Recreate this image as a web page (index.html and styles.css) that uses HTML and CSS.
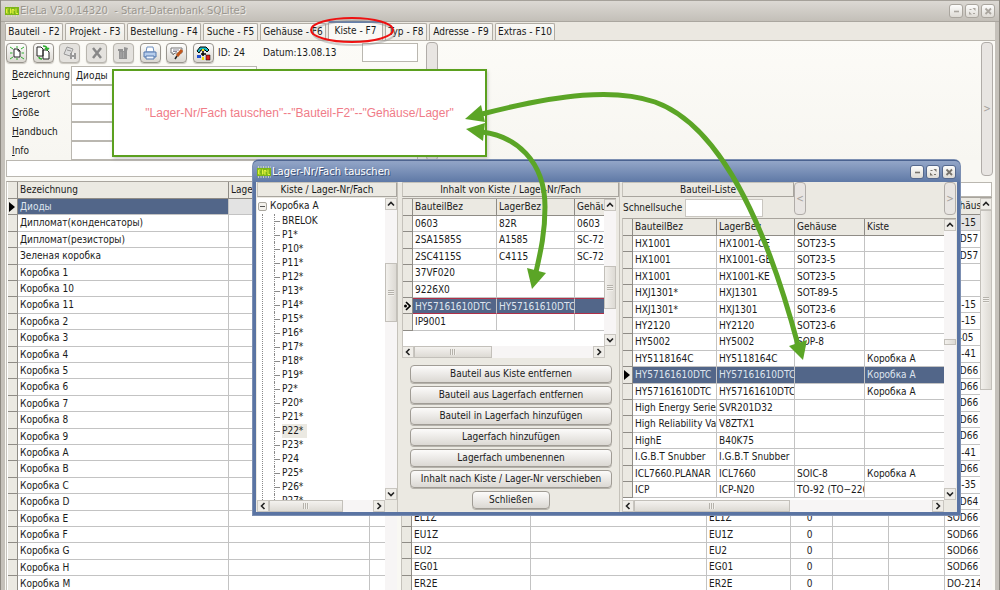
FILE: index.html
```html
<!DOCTYPE html>
<html lang="de">

<head>
    <meta charset="UTF-8">
    <meta name="viewport" content="width=device-width, initial-scale=1.0">
    <title>EleLa - Lager-Nr/Fach tauschen</title>
    <link rel="stylesheet" href="styles.css">
</head>

<body>

    <!-- Shared icon shapes -->
    <svg class="symbols" aria-hidden="true">
        <symbol id="i-up" viewBox="0 0 10 10"><path d="M2 6.5 L5 3.5 L8 6.5" fill="none" stroke="#222" stroke-width="1.6"/></symbol>
        <symbol id="i-down" viewBox="0 0 10 10"><path d="M2 3.5 L5 6.5 L8 3.5" fill="none" stroke="#222" stroke-width="1.6"/></symbol>
        <symbol id="i-left" viewBox="0 0 10 10"><path d="M6.5 2 L3.5 5 L6.5 8" fill="none" stroke="#222" stroke-width="1.6"/></symbol>
        <symbol id="i-right" viewBox="0 0 10 10"><path d="M3.5 2 L6.5 5 L3.5 8" fill="none" stroke="#222" stroke-width="1.6"/></symbol>
        <symbol id="i-min" viewBox="0 0 12 12"><path d="M4 6.5 H9" stroke="currentColor" stroke-width="1.6"/></symbol>
        <symbol id="i-max" viewBox="0 0 12 12"><path d="M6.5 3 H9.5 V6 Z M3 6.5 V9.5 H6 Z" fill="currentColor"/><path d="M3.5 4.5 H5.5 M7 8.5 H9" stroke="currentColor"/></symbol>
        <symbol id="i-close" viewBox="0 0 12 12"><path d="M3.5 3.5 L9 9 M9 3.5 L3.5 9" stroke="currentColor" stroke-width="1.8"/></symbol>
        <symbol id="i-row" viewBox="0 0 8 12"><path d="M1 1 L7 6 L1 11 Z" fill="#000"/></symbol>
        <symbol id="i-logo" viewBox="0 0 14 12">
            <rect y="2" width="14" height="8" fill="#7cb518"/>
            <path d="M1 1 H14 M1 11 H14" stroke="#dfe8c0" stroke-width="1.5" stroke-dasharray="1 1.5"/>
            <path d="M3.5 4 H1.5 V8 H3.5 M1.5 6 H3 M5.5 3.5 V8.5 M9 6 H7 V8 H9 M7 6 V4.500 H9 V6 M11 3.500 V8.500 H13" fill="none" stroke="#e2f23c"/>
        </symbol>
    </svg>

    <!-- Main window -->
    <div class="window">
        <header class="titlebar">
            <svg class="logo"><use href="#i-logo"/></svg>
            <h1>EleLa V3.0.14320 &nbsp;- Start-Datenbank SQLite3</h1>
            <div class="win-buttons">
                <button aria-label="Minimieren"><svg><use href="#i-min"/></svg></button>
                <button aria-label="Maximieren"><svg><use href="#i-max"/></svg></button>
                <button aria-label="Fenster schließen"><svg><use href="#i-close"/></svg></button>
            </div>
        </header>

        <nav class="tabs">
            <button class="w-58">Bauteil - F2</button>
            <button class="w-60">Projekt - F3</button>
            <button class="w-74">Bestellung - F4</button>
            <button class="w-55">Suche - F5</button>
            <button class="w-66">Gehäuse - F6</button>
            <button class="w-55 active">Kiste - F7</button>
            <button class="w-42">Typ - F8</button>
            <button class="w-64">Adresse - F9</button>
            <button class="w-60">Extras - F10</button>
        </nav>

        <div class="page">
            <section class="form-area">
                <div class="form-left">
                    <div class="toolbar">
                        <div class="tools">
                            <button aria-label="Neu"><svg viewBox="0 0 16 16"><path d="M5 4 H9 L11 6 V12 H5 Z" fill="#fff" stroke="#222"/><path d="M9 4 V6 H11" fill="none" stroke="#222"/><path d="M1 2 L4 4 M15 2 L12 4 M1 14 L4 12 M15 14 L12 12 M1 8 H3.500 M12.500 8 H15 M8 1 V3 M8 13 V15" stroke="#2faf2f"/></svg></button>
                            <button aria-label="Kopieren"><svg viewBox="0 0 16 16"><path d="M2 2 H6 L8 4 V11 H2 Z M8 5 H12 L14 7 V14 H8 Z" fill="#fff" stroke="#222"/><path d="M8 1 Q12 1 12 4 M10 3 L12 5 L14 3 M4 12 Q4 14 7 14" fill="none" stroke="#2faf2f" stroke-width="1.5"/></svg></button>
                            <button class="off" aria-label="Speichern"><svg viewBox="0 0 16 16"><path d="M5 2 L11 4 L8 11 L2 9 Z M5 5 L9 6" fill="#ddd" stroke="#999"/><path d="M8 8 H14 V14 H8 Z" fill="#999"/><path d="M10 8 H12 V10 H10 Z M10 12 H12 V14 H10 Z" fill="#eee"/></svg></button>
                            <button class="off" aria-label="Löschen"><svg viewBox="0 0 16 16"><path d="M4 3 L12 13 M12 3 L4 13" stroke="#888" stroke-width="2.500"/></svg></button>
                            <button class="off" aria-label="Papierkorb"><svg viewBox="0 0 16 16"><path d="M4 6 H12 V14 H4 Z M3 4 H8 V6 H3 Z M9 2 L13 3 L12 6 H9 Z" fill="#949494"/><path d="M6 7 V13 M8.500 7 V13" stroke="#aaa"/></svg></button>
                            <button aria-label="Drucken"><svg viewBox="0 0 16 16"><path d="M5 2 H11 L12 7 H4 Z" fill="#fff" stroke="#6d8fc0"/><path d="M2 7 H14 V12 H2 Z" fill="#b6cdec" stroke="#5478ae"/><path d="M4 11 H12 V14 H4 Z" fill="#eef4fc" stroke="#5478ae"/></svg></button>
                            <button aria-label="Bearbeiten"><svg viewBox="0 0 16 16"><path d="M2 3 H13 V8 H6 L4 10 V8 H2 Z" fill="#fff" stroke="#777"/><path d="M4 5 H10 M4 6.500 H8" stroke="#8a8a9a"/><path d="M13 5 L8 11" fill="none" stroke="#c0561c" stroke-width="3"/><path d="M8 11 L6 14" stroke="#222" stroke-width="1.500"/></svg></button>
                            <button aria-label="Gehäuse"><svg viewBox="0 0 16 16"><path d="M2 6 L5 2 H11 L14 5 L12 7 L10 5 H6 L4 8 Z" fill="#19b8c4" stroke="#000"/><path d="M7 4 H9 V6 H7 Z M7 12 H9 V15 H7 Z" fill="#f5e000"/><path d="M8 6 V11 M6 9 H11" fill="none" stroke="#000" stroke-width="1.500"/><path d="M2 10 H6 V13 H2 Z" fill="#1f4fd0"/><path d="M11 10 H15 V15 H11 Z" fill="#d8201c" stroke="#000" stroke-width=".5"/></svg></button>
                        </div>
                        <span class="info-id">ID: 24</span>
                        <span class="info-date">Datum:13.08.13</span>
                        <input class="date-extra" type="text" aria-label="Nummer">
                    </div>
                    <div class="fields">
                        <label for="bez"><u>B</u>ezeichnung</label><input id="bez" class="short" type="text" value="Диоды">
                        <label for="ort"><u>L</u>agerort</label><input id="ort" type="text">
                        <label for="gr"><u>G</u>röße</label><input id="gr" type="text">
                        <label for="hb"><u>H</u>andbuch</label><input id="hb" type="text">
                        <label for="inf"><u>I</u>nfo</label><input id="inf" type="text">
                    </div>
                </div>
                <button class="strip" aria-label="Bereich"></button>
                <div class="form-rest"></div>
                <button class="strip tall">&gt;</button>
            </section>

            <div class="panes">
                <section class="pane-left">
                    <input class="filter" type="text" aria-label="Filter">
                    <div class="grid-box">
                        <table class="grid">
                            <colgroup><col class="c-ind"><col class="c-211"><col class="c-141"><col></colgroup>
                            <thead><tr><th></th><th>Bezeichnung</th><th>Lagerort</th><th></th></tr></thead>
                            <tbody>
                                <tr class="current"><td><svg><use href="#i-row"/></svg></td><td class="sel">Диоды</td><td></td><td></td></tr>
                                <tr><td></td><td>Дипломат(конденсаторы)</td><td></td><td></td></tr>
                                <tr><td></td><td>Дипломат(резисторы)</td><td></td><td></td></tr>
                                <tr><td></td><td>Зеленая коробка</td><td></td><td></td></tr>
                                <tr><td></td><td>Коробка 1</td><td></td><td></td></tr>
                                <tr><td></td><td>Коробка 10</td><td></td><td></td></tr>
                                <tr><td></td><td>Коробка 11</td><td></td><td></td></tr>
                                <tr><td></td><td>Коробка 2</td><td></td><td></td></tr>
                                <tr><td></td><td>Коробка 3</td><td></td><td></td></tr>
                                <tr><td></td><td>Коробка 4</td><td></td><td></td></tr>
                                <tr><td></td><td>Коробка 5</td><td></td><td></td></tr>
                                <tr><td></td><td>Коробка 6</td><td></td><td></td></tr>
                                <tr><td></td><td>Коробка 7</td><td></td><td></td></tr>
                                <tr><td></td><td>Коробка 8</td><td></td><td></td></tr>
                                <tr><td></td><td>Коробка 9</td><td></td><td></td></tr>
                                <tr><td></td><td>Коробка A</td><td></td><td></td></tr>
                                <tr><td></td><td>Коробка B</td><td></td><td></td></tr>
                                <tr><td></td><td>Коробка C</td><td></td><td></td></tr>
                                <tr><td></td><td>Коробка D</td><td></td><td></td></tr>
                                <tr><td></td><td>Коробка E</td><td></td><td></td></tr>
                                <tr><td></td><td>Коробка F</td><td></td><td></td></tr>
                                <tr><td></td><td>Коробка G</td><td></td><td></td></tr>
                                <tr><td></td><td>Коробка H</td><td></td><td></td></tr>
                                <tr><td></td><td>Коробка M</td><td></td><td></td></tr>
                            </tbody>
                        </table>
                        <div class="vscroll"></div>
                    </div>
                </section>

                <section class="pane-right">
                    <input class="filter" type="text" aria-label="Bauteilfilter">
                    <div class="grid-box">
                        <table class="grid">
                            <colgroup><col class="c-ind"><col class="c-119"><col class="c-176"><col class="c-84"><col class="c-42"><col class="c-56"><col class="c-56"><col></colgroup>
                            <thead><tr><th></th><th></th><th></th><th></th><th></th><th></th><th></th><th>Gehäuse</th></tr></thead>
                            <tbody>
                                <tr class="current"><td></td><td></td><td></td><td></td><td></td><td></td><td></td><td>DO-15</td></tr>
                                <tr><td></td><td></td><td></td><td></td><td></td><td></td><td></td><td>SOD57</td></tr>
                                <tr><td></td><td></td><td></td><td></td><td></td><td></td><td></td><td>SOD57</td></tr>
                                <tr><td></td><td></td><td></td><td></td><td></td><td></td><td></td><td></td></tr>
                                <tr><td></td><td></td><td></td><td></td><td></td><td></td><td></td><td></td></tr>
                                <tr><td></td><td></td><td></td><td></td><td></td><td></td><td></td><td>DO-15</td></tr>
                                <tr><td></td><td></td><td></td><td></td><td></td><td></td><td></td><td>DO-15</td></tr>
                                <tr><td></td><td></td><td></td><td></td><td></td><td></td><td></td><td>A-405</td></tr>
                                <tr><td></td><td></td><td></td><td></td><td></td><td></td><td></td><td>DO-41</td></tr>
                                <tr><td></td><td></td><td></td><td></td><td></td><td></td><td></td><td>SOD66</td></tr>
                                <tr><td></td><td></td><td></td><td></td><td></td><td></td><td></td><td>SOD66</td></tr>
                                <tr><td></td><td></td><td></td><td></td><td></td><td></td><td></td><td>SOD66</td></tr>
                                <tr><td></td><td></td><td></td><td></td><td></td><td></td><td></td><td>SOD66</td></tr>
                                <tr><td></td><td></td><td></td><td></td><td></td><td></td><td></td><td>SOD66</td></tr>
                                <tr><td></td><td></td><td></td><td></td><td></td><td></td><td></td><td>DO-41</td></tr>
                                <tr><td></td><td></td><td></td><td></td><td></td><td></td><td></td><td>SOD66</td></tr>
                                <tr><td></td><td></td><td></td><td></td><td></td><td></td><td></td><td>DO-35</td></tr>
                                <tr><td></td><td></td><td></td><td></td><td></td><td></td><td></td><td>SOD64</td></tr>
                                <tr><td></td><td>EL1Z</td><td></td><td>EL1Z</td><td class="num">0</td><td></td><td></td><td>SOD66</td></tr>
                                <tr><td></td><td>EU1Z</td><td></td><td>EU1Z</td><td class="num">0</td><td></td><td></td><td>SOD66</td></tr>
                                <tr><td></td><td>EU2</td><td></td><td>EU2</td><td class="num">0</td><td></td><td></td><td>SOD66</td></tr>
                                <tr><td></td><td>EG01</td><td></td><td>EG01</td><td class="num">0</td><td></td><td></td><td>SOD66</td></tr>
                                <tr><td></td><td>ER2E</td><td></td><td>ER2E</td><td class="num">0</td><td></td><td></td><td>DO-214</td></tr>
                            </tbody>
                        </table>
                        <div class="vscroll">
                            <button aria-label="Nach oben"><svg><use href="#i-up"/></svg></button>
                            <div class="thumb thumb-main grip-h"></div>
                        </div>
                    </div>
                </section>
            </div>
        </div>
    </div>

    <!-- Dialog window -->
    <div class="dialog" role="dialog" aria-labelledby="dlg-title">
        <header class="titlebar">
            <svg class="logo"><use href="#i-logo"/></svg>
            <h2 id="dlg-title">Lager-Nr/Fach tauschen</h2>
            <div class="win-buttons">
                <button aria-label="Minimieren"><svg><use href="#i-min"/></svg></button>
                <button aria-label="Maximieren"><svg><use href="#i-max"/></svg></button>
                <button aria-label="Schließen"><svg><use href="#i-close"/></svg></button>
            </div>
        </header>

        <div class="dialog-body">
            <!-- Tree -->
            <section class="col-tree">
                <h3>Kiste / Lager-Nr/Fach</h3>
                <div class="tree-box">
                    <div class="tree">
                        <div class="root"><span class="toggle"></span>Коробка A</div>
                        <ul>
                            <li>BRELOK</li>
                            <li>P1*</li>
                            <li>P10*</li>
                            <li>P11*</li>
                            <li>P12*</li>
                            <li>P13*</li>
                            <li>P14*</li>
                            <li>P15*</li>
                            <li>P16*</li>
                            <li>P17*</li>
                            <li>P18*</li>
                            <li>P19*</li>
                            <li>P2*</li>
                            <li>P20*</li>
                            <li>P21*</li>
                            <li><span class="picked">P22*</span></li>
                            <li>P23*</li>
                            <li>P24</li>
                            <li>P25*</li>
                            <li>P26*</li>
                            <li>P27*</li>
                        </ul>
                    </div>
                    <div class="vscroll">
                        <button aria-label="Nach oben"><svg><use href="#i-up"/></svg></button>
                        <div class="track"><div class="thumb thumb-tree grip-h"></div></div>
                        <button aria-label="Nach unten"><svg><use href="#i-down"/></svg></button>
                    </div>
                </div>
                <div class="hscroll">
                    <button aria-label="Nach links"><svg><use href="#i-left"/></svg></button>
                    <div class="track"><div class="thumb w-74 grip-v"></div></div>
                    <button aria-label="Nach rechts"><svg><use href="#i-right"/></svg></button>
                </div>
            </section>

            <!-- Content of the box -->
            <section class="col-content">
                <h3>Inhalt von Kiste / Lager-Nr/Fach</h3>
                <div class="grid-box content-box">
                    <table class="grid">
                        <colgroup><col class="c-ind"><col class="c-84"><col class="c-78"><col></colgroup>
                        <thead><tr><th></th><th>BauteilBez</th><th>LagerBez</th><th>Gehäuse</th></tr></thead>
                        <tbody>
                            <tr><td></td><td>0603</td><td>82R</td><td>0603</td></tr>
                            <tr><td></td><td>2SA1585S</td><td>A1585</td><td>SC-72</td></tr>
                            <tr><td></td><td>2SC4115S</td><td>C4115</td><td>SC-72</td></tr>
                            <tr><td></td><td>37VF020</td><td></td><td></td></tr>
                            <tr><td></td><td>9226X0</td><td></td><td></td></tr>
                            <tr class="selected framed"><td><svg viewBox="0 0 8 12"><path d="M3 2 L7 6 L3 10" fill="none" stroke="#000" stroke-width="1.600"/><circle cx="2.500" cy="6" r="1.500"/></svg></td><td>HY57161610DTC</td><td>HY57161610DTC</td><td></td></tr>
                            <tr><td></td><td>IP9001</td><td></td><td></td></tr>
                        </tbody>
                    </table>
                    <div class="vscroll">
                        <button aria-label="Nach oben"><svg><use href="#i-up"/></svg></button>
                        <div class="track"><div class="thumb thumb-content grip-h"></div></div>
                        <button aria-label="Nach unten"><svg><use href="#i-down"/></svg></button>
                    </div>
                </div>
                <div class="hscroll content-scroll">
                    <button aria-label="Nach links"><svg><use href="#i-left"/></svg></button>
                    <div class="track"><div class="thumb w-78 grip-v"></div></div>
                    <button aria-label="Nach rechts"><svg><use href="#i-right"/></svg></button>
                </div>
                <div class="actions">
                    <button>Bauteil aus Kiste entfernen</button>
                    <button>Bauteil aus Lagerfach entfernen</button>
                    <button>Bauteil in Lagerfach hinzufügen</button>
                    <button>Lagerfach hinzufügen</button>
                    <button>Lagerfach umbenennen</button>
                    <button>Inhalt nach Kiste / Lager-Nr verschieben</button>
                    <button class="close">Schließen</button>
                </div>
            </section>

            <!-- Part list -->
            <section class="col-parts">
                <div class="parts-head">
                    <div class="parts-search">
                        <h3>Bauteil-Liste</h3>
                        <div class="quick">
                            <label for="quick">Schnellsuche</label>
                            <input id="quick" type="text">
                        </div>
                    </div>
                    <button class="strip">&lt;</button>
                    <div class="form-rest"></div>
                    <button class="strip">&gt;</button>
                </div>
                <div class="grid-box parts-box">
                    <table class="grid">
                        <colgroup><col class="c-ind"><col class="c-84"><col class="c-78"><col class="c-70"><col></colgroup>
                        <thead><tr><th></th><th>BauteilBez</th><th>LagerBez</th><th>Gehäuse</th><th>Kiste</th></tr></thead>
                        <tbody>
                            <tr><td></td><td>HX1001</td><td>HX1001-CE</td><td>SOT23-5</td><td></td></tr>
                            <tr><td></td><td>HX1001</td><td>HX1001-GE</td><td>SOT23-5</td><td></td></tr>
                            <tr><td></td><td>HX1001</td><td>HX1001-KE</td><td>SOT23-5</td><td></td></tr>
                            <tr><td></td><td>HXJ1301*</td><td>HXJ1301</td><td>SOT-89-5</td><td></td></tr>
                            <tr><td></td><td>HXJ1301*</td><td>HXJ1301</td><td>SOT23-6</td><td></td></tr>
                            <tr><td></td><td>HY2120</td><td>HY2120</td><td>SOT23-6</td><td></td></tr>
                            <tr><td></td><td>HY5002</td><td>HY5002</td><td>SOP-8</td><td></td></tr>
                            <tr><td></td><td>HY5118164C</td><td>HY5118164C</td><td></td><td>Коробка A</td></tr>
                            <tr class="selected"><td><svg><use href="#i-row"/></svg></td><td>HY57161610DTC</td><td>HY57161610DTC</td><td></td><td>Коробка A</td></tr>
                            <tr><td></td><td>HY57161610DTC</td><td>HY57161610DTC</td><td></td><td>Коробка A</td></tr>
                            <tr><td></td><td>High Energy Series</td><td>SVR201D32</td><td></td><td></td></tr>
                            <tr><td></td><td>High Reliability Varistor</td><td>V8ZTX1</td><td></td><td></td></tr>
                            <tr><td></td><td>HighE</td><td>B40K75</td><td></td><td></td></tr>
                            <tr><td></td><td>I.G.B.T Snubber</td><td>I.G.B.T Snubber</td><td></td><td></td></tr>
                            <tr><td></td><td>ICL7660.PLANAR</td><td>ICL7660</td><td>SOIC-8</td><td>Коробка A</td></tr>
                            <tr><td></td><td>ICP</td><td>ICP-N20</td><td>TO-92 (TO−226)</td><td></td></tr>
                        </tbody>
                    </table>
                    <div class="vscroll">
                        <button aria-label="Nach oben"><svg><use href="#i-up"/></svg></button>
                        <div class="track"><div class="thumb thumb-parts"></div></div>
                        <button aria-label="Nach unten"><svg><use href="#i-down"/></svg></button>
                    </div>
                </div>
                <div class="hscroll">
                    <button aria-label="Nach links"><svg><use href="#i-left"/></svg></button>
                    <div class="track"><div class="thumb w-156 grip-v"></div></div>
                    <button aria-label="Nach rechts"><svg><use href="#i-right"/></svg></button>
                </div>
            </section>
        </div>
    </div>

    <!-- Annotations -->
    <p class="callout">"Lager-Nr/Fach tauschen"--"Bauteil-F2"--"Gehäuse/Lager"</p>
    <svg class="marks" viewBox="0 0 1000 590" aria-hidden="true">
        <ellipse cx="354" cy="33" rx="41" ry="12" fill="none" stroke="#8886" stroke-width="2"/>
        <ellipse cx="352" cy="30" rx="41" ry="12" fill="none" stroke="#ee1111" stroke-width="2"/>
        <g fill="none" stroke="#5ba526" stroke-width="5">
            <path d="M482 114 C560 94 615 88 655 102 C725 127 770 240 798 345"/>
            <path d="M482 132 C515 136 545 160 545 207 C545 232 541 250 536 272"/>
        </g>
        <g fill="#5ba526">
            <path d="M465 119 L481 105 L485 122 Z"/>
            <path d="M466 129 L485 123 L483 141 Z"/>
            <path d="M532 289 L527 268 L546 273 Z"/>
            <path d="M803 360 L789 346 L807 340 Z"/>
        </g>
    </svg>

</body>

</html>
```
FILE: styles.css
```css
* {
    box-sizing: border-box;
}

body {
    margin: 0;
    height: 100vh;
    overflow: hidden;
    position: relative;
    background: #b5b1a9;
    color: #1a1a1a;
    font-family: "DejaVu Sans Condensed", "DejaVu Sans", sans-serif;
    font-size: 10px;
    line-height: 14px;
}

button,
input {
    font: inherit;
    color: inherit;
    margin: 0;
    padding: 0;
    border-radius: 0;
}

h1,
h2,
h3,
p,
ul {
    margin: 0;
    padding: 0;
    font-weight: normal;
}

.symbols {
    display: none;
}

/* Windows */
.window {
    height: 100vh;
    display: flex;
    flex-direction: column;
    padding: 0 4px;
    border-left: 1px solid #8d8981;
    border-right: 1px solid #8d8981;
    background: #c5c1ba;
    overflow: hidden;
}

.titlebar {
    display: flex;
    align-items: center;
    flex: none;
    height: 22px;
    margin: 0 -4px;
    padding: 0 4px;
    background: linear-gradient(#dcd9d4, #c3bfb8);
    border-top: 1px solid #a5a19a;
    border-bottom: 1px solid #aaa69f;
    color: #9a968f;
}

.titlebar h1,
.titlebar h2 {
    flex: 1;
    font-family: "DejaVu Sans", sans-serif;
    font-size: 10px;
    white-space: pre;
    text-shadow: 1px 1px 0 #eeece8;
}

.logo {
    width: 14px;
    height: 12px;
    margin-right: 1px;
}

.win-buttons {
    display: flex;
    gap: 2px;
}

.win-buttons button {
    width: 14px;
    height: 14px;
    border: 1px solid #aaa69f;
    border-radius: 3px;
    background: linear-gradient(#fdfdfc, #dedbd5);
    color: #aaa69f;
}

.win-buttons svg {
    display: block;
    width: 12px;
    height: 12px;
}

/* Tabs */
.tabs {
    display: flex;
    flex: none;
    align-items: flex-end;
    gap: 2px;
    height: 19px;
    background: #ebe8e1;
    border-bottom: 1px solid #b9b5ad;
}

.tabs button {
    height: 17px;
    border: 1px solid #b0aca4;
    border-bottom: 0;
    border-radius: 2px 2px 0 0;
    background: linear-gradient(#faf9f6, #eeece6);
    white-space: nowrap;
}

.tabs .active {
    height: 19px;
    padding-bottom: 2px;
    border-top: 2px solid #6480ad;
    background: #faf9f5;
}

.w-42 { width: 42px; }
.w-55 { width: 55px; }
.w-58 { width: 58px; }
.w-60 { width: 60px; }
.w-64 { width: 64px; }
.w-66 { width: 66px; }
.w-74 { width: 74px; }
.w-78 { width: 78px; }
.w-156 { width: 156px; }

/* Upper form */
.page {
    flex: 1;
    min-height: 0;
    display: flex;
    flex-direction: column;
    background: #f9f8f3;
}

.form-area {
    display: flex;
    flex: none;
    height: 119px;
    padding: 1px 2px 0 1px;
    background: linear-gradient(#fcfbf7, #f7f6f1);
}

.form-left {
    width: 420px;
}

.form-rest {
    flex: 1;
}

.toolbar {
    display: flex;
    align-items: center;
    height: 21px;
}

.tools {
    display: flex;
    justify-content: space-between;
    width: 208px;
}

.tools button {
    width: 21px;
    height: 20px;
    border: 1px solid #99958e;
    border-radius: 4px;
    background: linear-gradient(#fefefd, #dad7d1);
    box-shadow: 0 1px 1px #c9c6bf;
}

.tools .off {
    border-color: #b8b5ae;
    background: #e4e2de;
}

.tools svg {
    display: block;
    width: 16px;
    height: 16px;
    margin: 0 auto;
}

.info-id {
    width: 45px;
    margin-left: 4px;
}

.info-date {
    flex: 1;
}

.date-extra {
    width: 56px;
    height: 19px;
    margin-right: 8px;
    border: 1px solid #bab7b0;
    background: #fff;
}

.fields {
    display: grid;
    grid-template-columns: 59px 1fr;
    grid-auto-rows: 1fr;
    align-items: center;
    height: 94px;
    margin: 3px 8px 0 6px;
}

.fields input {
    height: 100%;
    padding: 0 4px;
    border: 1px solid #bab7b0;
    background: #fff;
}

.fields .short {
    width: 186px;
}

.strip {
    width: 12px;
    height: 119px;
    border: 1px solid #b0aca8;
    border-radius: 4px;
    background: #e8e5e2;
    color: #a5a19b;
}

.strip.tall {
    height: 134px;
    z-index: 1;
}

/* Lower panes */
.panes {
    flex: 1;
    min-height: 0;
    display: flex;
    gap: 4px;
    padding: 0 3px 0 1px;
}

.pane-left,
.pane-right {
    display: flex;
    flex-direction: column;
    min-height: 0;
}

.pane-left {
    width: 391px;
}

.pane-right {
    flex: 1;
    min-width: 0;
    padding-top: 22px;
}

.filter {
    flex: none;
    width: 100%;
    height: 17px;
    border: 1px solid #bab7b0;
    background: #fff;
}

.pane-right .filter {
    height: 15px;
}

.grid-box {
    flex: 1;
    min-height: 0;
    display: flex;
    align-items: flex-start;
    overflow: hidden;
    border-top: 1px solid #a8a49d;
    border-left: 1px solid #c5c2bb;
    background: #fff;
}

.pane-left .grid-box {
    margin-top: 4px;
    padding-left: 1px;
}

/* Tables */
.grid {
    flex: 1;
    width: 100%;
    min-width: 0;
    table-layout: fixed;
    border-collapse: separate;
    border-spacing: 0;
}

.c-ind { width: 10px; }
.c-42 { width: 42px; }
.c-56 { width: 56px; }
.c-70 { width: 70px; }
.c-78 { width: 78px; }
.c-84 { width: 84px; }
.c-119 { width: 119px; }
.c-141 { width: 141px; }
.c-176 { width: 176px; }
.c-211 { width: 211px; }

.grid th,
.grid td {
    height: 16px;
    padding: 0 0 0 2px;
    overflow: hidden;
    white-space: nowrap;
    text-align: left;
    font-weight: normal;
    border-right: 1px solid #c3c3c3;
    border-bottom: 1px solid #c3c3c3;
}

.grid th {
    height: 17px;
    background: #ebe9e2;
    border-color: #8f8c86;
}

.grid tr > :first-child {
    padding: 0;
    background: #ebe9e2;
    border-color: #8f8c86;
}

.grid tr > :last-child {
    border-right: 0;
}

/* two rows in five are a pixel taller */
.grid tr:nth-child(5n+2) td,
.grid tr:nth-child(5n+4) td {
    height: 17px;
}

.grid svg {
    display: block;
    width: 8px;
    height: 12px;
}

.grid .num {
    text-align: center;
    padding: 0 4px 0 0;
}

.grid .current td {
    background: #e3e3e3;
}

.grid .current .sel,
.grid .selected td {
    background: #526689;
    color: #dfe5ef;
}

.grid .selected td:first-child,
.grid .current td:first-child {
    background: #ebe9e2;
}

.grid .framed td + td {
    border-top: 1px solid #b03048;
    border-bottom-color: #b03048;
    line-height: 13px;
}

/* Scrollbars */
.vscroll {
    display: flex;
    flex-direction: column;
    flex: none;
    align-self: stretch;
    width: 12px;
    background: #f7f5f5;
}

.hscroll {
    display: flex;
    flex: none;
    height: 12px;
    margin-right: 12px;
    background: #f7f5f5;
}

.vscroll button,
.hscroll button {
    flex: none;
    width: 12px;
    height: 12px;
    border: 1px solid #c9c6c0;
    background: #efede8;
}

.vscroll svg,
.hscroll svg {
    display: block;
    width: 10px;
    height: 10px;
}

.track {
    flex: 1;
    min-height: 0;
}

.thumb {
    display: flex;
    align-items: center;
    justify-content: center;
    border: 1px solid #c3c0ba;
    background: linear-gradient(90deg, #f2f0ec, #dddad4);
}

.hscroll .thumb {
    height: 12px;
    background: linear-gradient(#f4f2ef, #dddad4);
}

.grip-h::before,
.grip-v::before {
    content: "";
    width: 6px;
    height: 6px;
    background: repeating-linear-gradient(#b5b2ab 0 1px, #f2f0ec 1px 2px);
}

.grip-v::before {
    background: repeating-linear-gradient(90deg, #b5b2ab 0 1px, #f2f0ec 1px 2px);
}

.thumb-main { height: 180px; }
.thumb-tree { height: 59px; margin-top: 53px; }
.thumb-content { height: 43px; margin-top: 55px; }
.thumb-parts { height: 6px; margin-top: 108px; }

/* Dialog */
.dialog {
    position: absolute;
    top: 160px;
    left: 253px;
    right: 40px;
    border: 3px solid #5a74a3;
    border-top: 0;
    border-radius: 6px 6px 0 0;
    background: #ebe9e2;
    box-shadow: inset 0 0 0 1px #3f5680, 0 0 0 1px #7c8fb2;
}

.dialog .titlebar {
    margin: 0 -3px;
    padding: 0 4px;
    border: 0;
    border-top: 1px solid #4a6290;
    border-radius: 5px 5px 0 0;
    background: linear-gradient(#93a6c8, #5f79a6);
    color: #fff;
}

.dialog .titlebar h2 {
    text-shadow: 1px 1px 0 #3f5278;
}

.dialog .win-buttons button {
    border-color: #55688c;
    color: #77736c;
}

.dialog-body {
    display: flex;
    background: #ebe9e2;
    padding: 0 1px;
}

.dialog h3 {
    height: 15px;
    border: 1px solid #c5c2ba;
    border-right-color: #a8a59e;
    border-bottom-color: #a8a59e;
    font-size: 10px;
    line-height: 14px;
    text-align: center;
}

.col-tree {
    width: 141px;
    border-right: 1px solid #c5c2ba;
}

.tree-box {
    display: flex;
    height: 302px;
    margin-top: 1px;
    background: #fff;
}

.tree {
    flex: 1;
    overflow: hidden;
    padding-left: 1px;
}

.root {
    display: flex;
    align-items: center;
    height: 16px;
    gap: 3px;
}

.toggle {
    width: 9px;
    height: 9px;
    border: 1px solid #aaa79f;
    border-radius: 2px;
    background: linear-gradient(#555, #555) center / 5px 1px no-repeat #f3f1ec;
}

.tree ul {
    list-style: none;
    margin-left: 4px;
    padding-left: 11px;
    border-left: 1px dotted #8a8a8a;
}

.tree li {
    display: flex;
    align-items: center;
    height: 14px;
    gap: 2px;
    border-left: 1px dotted #8a8a8a;
}

.tree li::before {
    content: "";
    width: 5px;
    border-top: 1px solid #8a8a8a;
}

.picked {
    padding-right: 4px;
    background: #ebe9e2;
}

.col-content {
    width: 218px;
    margin-left: 4px;
    border-right: 1px solid #c5c2ba;
}

.content-box {
    height: 148px;
    margin-right: 3px;
    margin-top: 1px;
}

.content-scroll {
    margin-right: 14px;
}

.actions {
    display: flex;
    flex-direction: column;
    align-items: center;
    gap: 3px;
    padding: 7px 7px 0 8px;
}

.actions button {
    width: 100%;
    height: 18px;
    border: 1px solid #a09c95;
    border-radius: 4px;
    background: linear-gradient(#fcfbfa, #dbd8d3);
    box-shadow: 0 1px 0 #b5b2ab;
    white-space: nowrap;
}

.actions .close {
    width: 78px;
}

.col-parts {
    flex: 1;
    min-width: 0;
    margin-left: 2px;
}

.parts-head {
    display: flex;
}

.parts-head .strip {
    height: 33px;
}

.parts-search {
    width: 172px;
}

.quick {
    display: flex;
    align-items: center;
    padding-left: 1px;
    margin-top: 2px;
}

.quick label {
    width: 62px;
}

.quick input {
    width: 78px;
    height: 18px;
    border: 1px solid #c9c6c0;
    background: #fff;
}

.parts-box {
    height: 282px;
    margin-top: 1px;
}

/* Annotations on top of the windows */
.callout {
    position: absolute;
    top: 69px;
    left: 112px;
    display: flex;
    align-items: center;
    justify-content: center;
    width: 375px;
    height: 88px;
    border: 2px solid #5ba01f;
    background: #fff;
    box-shadow: 1px 2px 3px #8886;
    color: #f07c88;
    font-family: "Liberation Sans", Arial, sans-serif;
    font-size: 12px;
}

.marks {
    position: absolute;
    top: 0;
    left: 0;
    width: 1000px;
    height: 590px;
    pointer-events: none;
}
```
